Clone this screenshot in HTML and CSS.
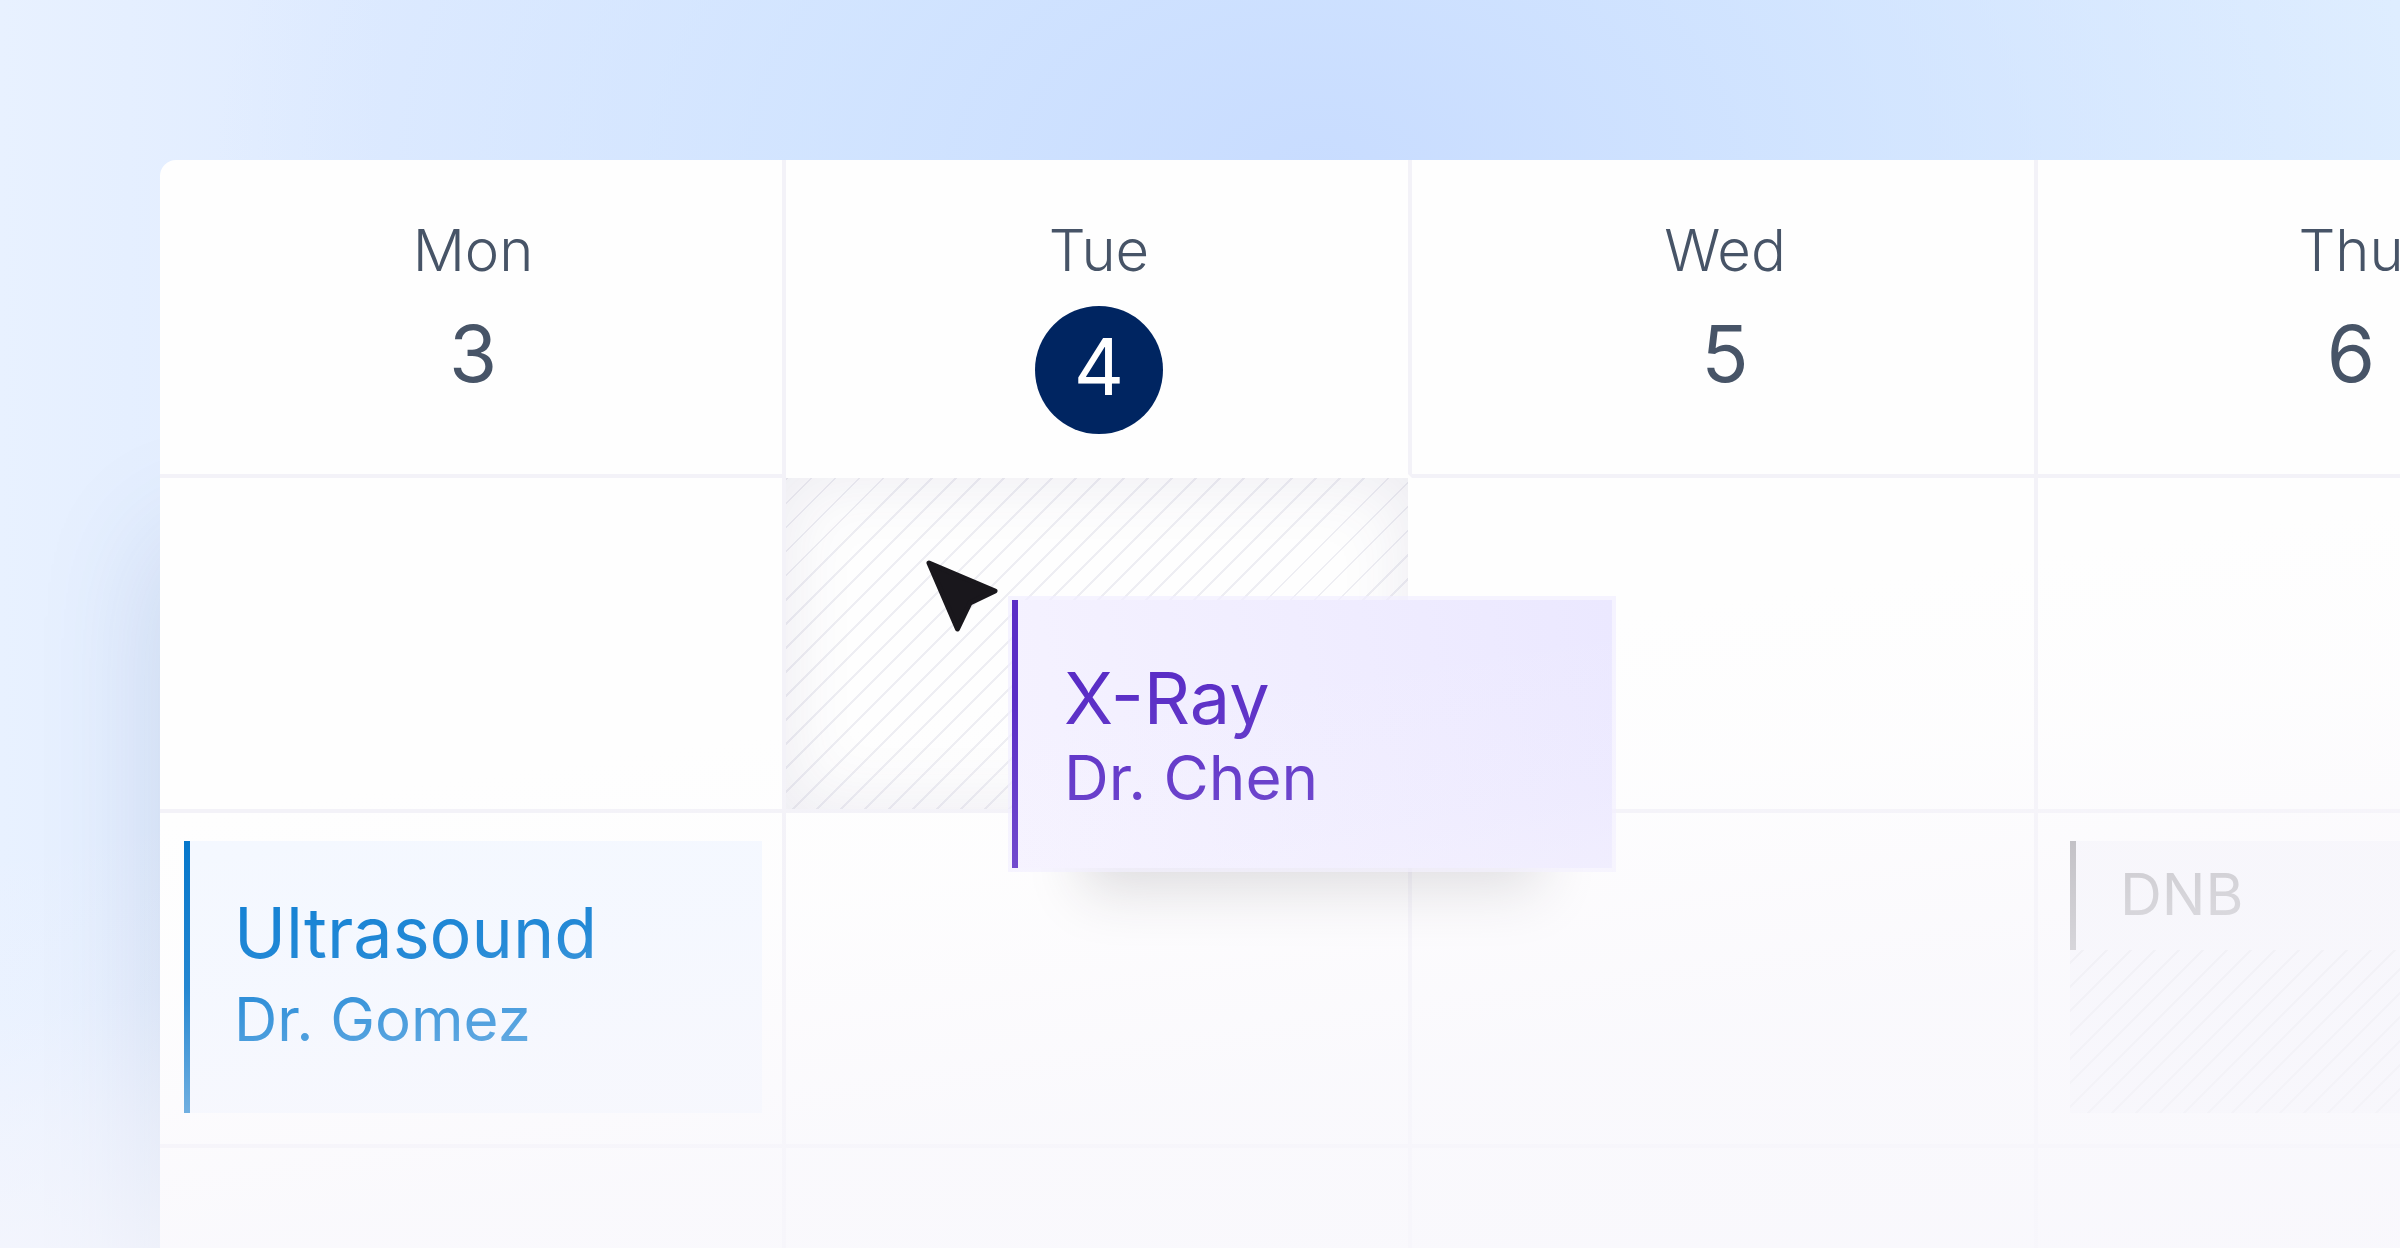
FILE: index.html
```html
<!DOCTYPE html>
<html lang="en">
<head>
    <meta charset="UTF-8">
    <meta name="viewport" content="width=device-width, initial-scale=1.0">
    <title>Appointments</title>
    <link rel="stylesheet" href="styles.css">
</head>
<body>
    <main class="stage">
        <div class="calendar">
            <table class="week">
                <thead>
                    <tr>
                        <th scope="col"><span class="day">Mon</span><span class="date">3</span></th>
                        <th scope="col"><span class="day">Tue</span><span class="date today">4</span></th>
                        <th scope="col"><span class="day">Wed</span><span class="date">5</span></th>
                        <th scope="col"><span class="day">Thu</span><span class="date">6</span></th>
                    </tr>
                </thead>
                <tbody>
                    <tr>
                        <td></td>
                        <td class="drop-target">
                            <svg class="cursor" viewBox="0 0 72 72" aria-hidden="true">
                                <path d="M3 3 L69 31 L44 43 L31.500 69 Z" fill="#19171c" stroke="#19171c" stroke-width="5" stroke-linejoin="round"/>
                            </svg>
                            <div class="event dragging">
                                <span class="title">X-Ray</span>
                                <span class="doctor">Dr. Chen</span>
                            </div>
                        </td>
                        <td></td>
                        <td></td>
                    </tr>
                    <tr>
                        <td>
                            <div class="event ultrasound">
                                <span class="title">Ultrasound</span>
                                <span class="doctor">Dr. Gomez</span>
                            </div>
                        </td>
                        <td></td>
                        <td></td>
                        <td>
                            <div class="blocked">
                                <span class="blocked-label">DNB</span>
                            </div>
                        </td>
                    </tr>
                    <tr>
                        <td></td>
                        <td></td>
                        <td></td>
                        <td></td>
                    </tr>
                </tbody>
            </table>
        </div>
    </main>
</body>
</html>
```
FILE: styles.css
```css
* {
    box-sizing: border-box;
}

body {
    margin: 0;
    font-family: Inter, "Liberation Sans", sans-serif;
    color: #475467;
}

.stage {
    position: relative;
    height: 100vh;
    padding: 160px 0 0 160px;
    overflow: hidden;
    background:
        radial-gradient(ellipse 46% 60% at 55% 14%, #c8dcff 0%, rgba(206, 226, 255, 0.8) 45%, rgba(220, 236, 255, 0) 100%),
        linear-gradient(90deg, #e8f1ff 0%, #dfebff 16%, #deedff 100%);
}

/* fades the lower part of the page out */
.stage::after {
    content: "";
    position: absolute;
    inset: 0;
    z-index: 3;
    background: linear-gradient(172deg, rgba(249, 247, 252, 0) 53%, rgba(249, 247, 252, 0.15) 64%, rgba(249, 247, 252, 0.46) 72%, rgba(248, 247, 252, 0.7) 80%, rgba(248, 247, 252, 0.9) 100%);
    pointer-events: none;
}

.calendar {
    width: calc(100% + 264px);
    background: #fefefe;
    border-radius: 16px 0 0 0;
    box-shadow: 0 380px 120px 0 rgba(60, 90, 140, 0.17);
}

.week {
    width: 100%;
    table-layout: fixed;
    border-collapse: separate;
    border-spacing: 0;
}

th,
td {
    position: relative;
    height: 335px;
    padding: 28px 20px 0 24px;
    border-right: 4px solid #f3f2f8;
    border-bottom: 4px solid #f3f2f8;
    vertical-align: top;
}

th {
    height: 318px;
    padding: 54px 0 0 4px;
    font-weight: 300;
    text-align: center;
}

th:nth-child(2) {
    border-bottom-color: #fefefe;
}

.day {
    display: block;
    margin-bottom: 20px;
    font-size: 58px;
    line-height: 72px;
}

.date {
    display: block;
    font-size: 78px;
    font-weight: 400;
    line-height: 96px;
}

.today {
    width: 128px;
    height: 128px;
    margin: 0 auto;
    border-radius: 50%;
    background: #002561;
    color: #fff;
    line-height: 122px;
}

.drop-target {
    border-right-color: #fefefe;
    background: repeating-linear-gradient(135deg, #eeeef3 0 2px, rgba(255, 255, 255, 0) 2px 17px);
    background-clip: padding-box;
    box-shadow: inset 0 0 70px rgba(70, 60, 120, 0.1);
}

.cursor {
    position: absolute;
    top: 82px;
    left: 140px;
    z-index: 2;
    width: 72px;
    height: 72px;
}

.event {
    display: flex;
    flex-direction: column;
    justify-content: center;
    height: 272px;
    padding-left: 44px;
    border-left: 6px solid;
    white-space: nowrap;
}

.title {
    font-size: 70px;
    line-height: 88px;
}

.doctor {
    font-size: 60px;
    line-height: 84px;
}

.ultrasound {
    padding-bottom: 4px;
    border-color: #0074ca;
    background: #f4f8ff;
    color: #0077d0;
}

.dragging {
    position: absolute;
    top: 122px;
    left: 226px;
    z-index: 1;
    width: 600px;
    height: 268px;
    padding-top: 8px;
    padding-left: 46px;
    border-color: #5a2dc6;
    background: linear-gradient(80deg, #f5f2ff 0%, #f0edff 50%, #ebe8ff 100%);
    box-shadow: 0 0 0 4px rgba(241, 238, 255, 0.7), 0 96px 56px -72px rgba(40, 35, 45, 0.18);
    color: #5a2dc6;
}

.dragging .title {
    font-size: 72px;
    line-height: 80px;
}

.dragging .doctor {
    font-size: 62px;
    line-height: 80px;
}

.blocked {
    height: 272px;
    margin: 0 0 0 8px;
    background: repeating-linear-gradient(135deg, #e4e4ea 0 2px, #f6f6fb 2px 17px);
}

.blocked-label {
    display: block;
    height: 109px;
    padding-left: 44px;
    border-left: 6px solid #98979c;
    background: #f6f6fb;
    color: #a6a5aa;
    font-size: 58px;
    line-height: 106px;
}
```
